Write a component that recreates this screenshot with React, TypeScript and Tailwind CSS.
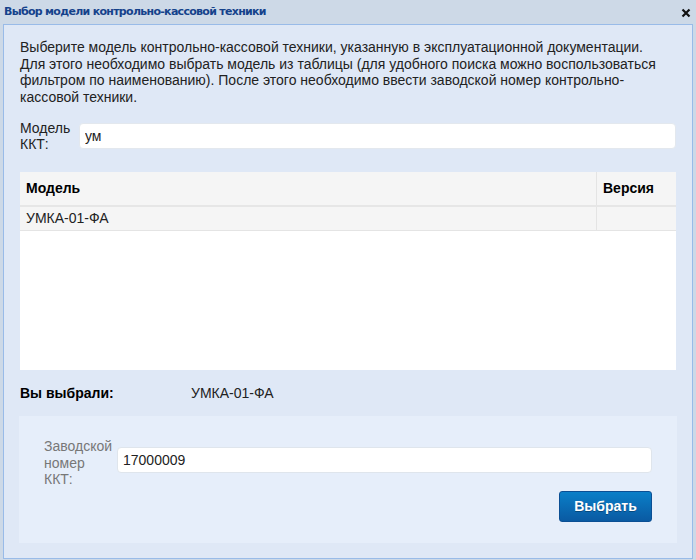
import React from 'react';

export default function App() {
  return (
    <div className="w-[696px] h-[560px] bg-[#cdd9e7] flex flex-col overflow-hidden font-['Liberation_Sans',Arial,sans-serif]">
      {/* Header */}
      <div className="h-[24px] flex items-center justify-between pl-[4px] pr-[5px]">
        <span className="text-[11px] font-bold text-[#15428b] font-['DejaVu_Sans',Tahoma,sans-serif] tracking-[-0.7px]">
          Выбор модели контрольно-кассовой техники
        </span>
        <svg width="10" height="10" viewBox="0 0 10 10" className="mt-[1px]">
          <path d="M1.5 1.5 L8.5 8.5 M8.5 1.5 L1.5 8.5" stroke="#111" strokeWidth="2.2" />
        </svg>
      </div>

      {/* Body */}
      <div className="mx-[3px] h-[535px] border border-[#99bbe8] bg-[#dfe8f6] px-[16px] pt-[14px] text-[14px] text-[#222]">
        <p className="leading-[16.5px]">
          Выберите модель контрольно-кассовой техники, указанную в эксплуатационной документации.
          <br />
          Для этого необходимо выбрать модель из таблицы (для удобного поиска можно воспользоваться
          фильтром по наименованию). После этого необходимо ввести заводской номер контрольно-
          кассовой техники.
        </p>

        <div className="flex items-center mt-[15px] pr-[0px]">
          <label className="w-[59px] leading-[16px]">Модель ККТ:</label>
          <input
            defaultValue="ум"
            className="flex-1 h-[26px] bg-white rounded-[4px] border border-[#e3e8ee] px-[5px] text-[14px] outline-none"
          />
        </div>

        {/* Table */}
        <div className="mt-[20px] h-[198px] bg-white flex flex-col">
          <div className="flex h-[35px] bg-[#f5f5f5] border-b-[2px] border-[#e6e6e6] font-bold text-black">
            <div className="flex-1 flex items-center pl-[6px]">Модель</div>
            <div className="w-[80px] flex items-center pl-[6px] border-l border-[#e4e4e4]">Версия</div>
          </div>
          <div className="flex h-[24px] bg-[#f5f5f5] border-b border-[#e4e4e4]">
            <div className="flex-1 flex items-center pl-[6px]">УМКА-01-ФА</div>
            <div className="w-[80px] border-l border-[#e4e4e4]" />
          </div>
        </div>

        <div className="flex items-center h-[46px]">
          <span className="w-[171px] font-bold text-black">Вы выбрали:</span>
          <span>УМКА-01-ФА</span>
        </div>

        <div className="h-[127px] bg-[#e6eefa] mr-[-1px] ml-[-1px] pl-[25px] pr-[25px] pt-[22px]">
          <div className="flex items-start">
            <label className="w-[73px] text-[#777] leading-[16.5px]">Заводской номер ККТ:</label>
            <input
              defaultValue="17000009"
              className="flex-1 mt-[9px] h-[26px] bg-white rounded-[4px] border border-[#dfe5ec] px-[5px] text-[14px] text-[#222] outline-none"
            />
          </div>
          <div className="flex justify-end mt-[3px]">
            <button className="w-[93px] h-[31px] rounded-[3px] border border-[#0b4f94] bg-gradient-to-b from-[#0a7fc8] to-[#0a5aa2] text-white font-bold text-[14px] [text-shadow:0_1px_0_rgba(0,0,0,0.3)]">
              Выбрать
            </button>
          </div>
        </div>
      </div>
    </div>
  );
}
